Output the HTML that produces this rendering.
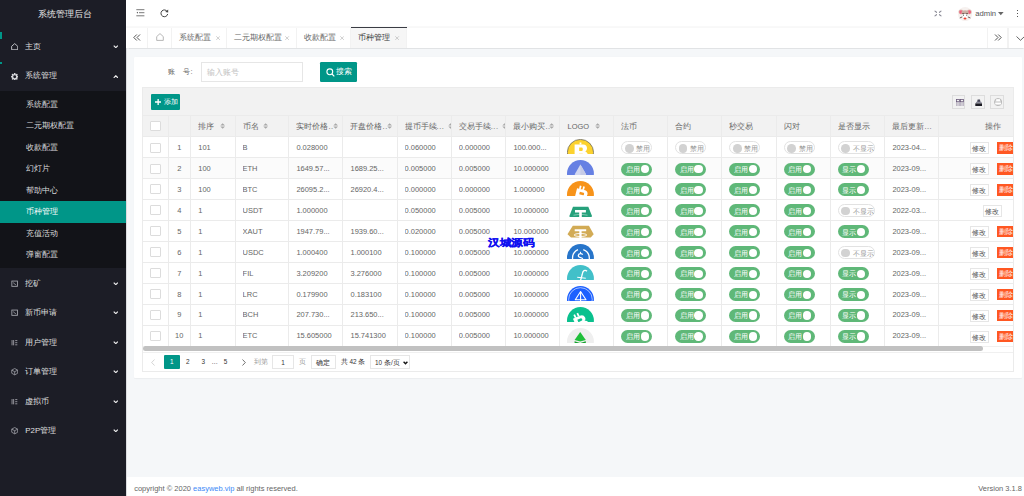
<!DOCTYPE html><html><head><meta charset="utf-8"><style>
*{margin:0;padding:0;box-sizing:border-box}
html,body{width:1024px;height:496px;overflow:hidden;background:#f5f7f9;font-family:"Liberation Sans",sans-serif;}
.abs{position:absolute}
#side{position:absolute;left:0;top:0;width:126px;height:496px;background:#1c1d26;}
.logo{position:absolute;left:0;width:126px;top:8px;text-align:center;color:#e8e8e8;font-size:9px;line-height:12px;padding-left:3.3px}
.ni{position:absolute;left:0;width:126px;height:29.6px;color:rgba(255,255,255,.88);font-size:7.9px;}
.ni .t{position:absolute;left:25.3px;top:0;line-height:29.6px;}
.ni .ic{position:absolute;left:10.8px;top:11.3px;width:7.4px;height:7.4px}
.ar{position:absolute;left:112.6px;width:5.6px;height:3.2px}
.ci{position:absolute;left:0;width:126px;height:21.48px;color:rgba(255,255,255,.85);font-size:7.9px;line-height:21.48px;padding-left:26px}
.ci.on{background:#009688;color:#fff}
#hdr{position:absolute;left:126px;top:0;width:898px;height:26.7px;background:#fff;}
#tabs{position:absolute;left:126px;top:26.7px;width:898px;height:21px;background:#fff;border-top:1px solid #f8f8f8;box-shadow:0 0.6px 1px rgba(0,0,0,.08)}
.tab{position:absolute;top:0;height:20px;border-right:1px solid #f2f2f2;font-size:7.9px;color:#666;line-height:20px}
.tab .x{position:absolute;color:#bbb;font-size:7px}
#vline{position:absolute;left:126px;top:47.6px;width:1.3px;height:430px;background:#dcdde0}
#card{position:absolute;left:133.5px;top:56.5px;width:888px;height:321.8px;background:#fff;border-radius:1px;box-shadow:0 0.5px 1px rgba(0,0,0,.04)}
#tbl{position:absolute;left:141.9px;top:86.9px;width:872px;height:285.4px;border:1px solid #ebebeb;overflow:hidden;background:#fff}
.cell{position:absolute;overflow:hidden;white-space:nowrap;font-size:7.47px;color:#666;}
.hl{position:absolute;background:#ebebeb}
.sw{position:absolute;height:13px;border-radius:7px;font-size:6.8px;line-height:13px}
.sw.on{background:#5fb878;color:#fff;width:30.9px}
.sw.off{background:#fff;border:0.8px solid #e2e2e2;color:#999;width:30.9px;height:13.3px}
.knob{position:absolute;top:2.3px;width:8.4px;height:8.4px;border-radius:50%}
.sw.on .knob{background:#fff}
.sw.off .knob{background:#d2d2d2}
.btn{position:absolute;height:11.6px;font-size:6.9px;line-height:11px;text-align:center}
.edit{background:#fff;border:0.6px solid #e6e6e6;color:#555;width:19.2px}
.del{background:#ff5722;color:#fff;width:19.2px}
</style></head><body><div id="side">
<div class="logo">系统管理后台</div>
<div class="abs" style="left:0;top:32px;width:2px;height:7px;background:#009688"></div>
<div class="abs" style="left:0;top:61.6px;width:2px;height:2.3px;background:#009688"></div>
<div class="ni" style="top:31.7px"><svg class="ic" viewBox="0 0 7 7"><path d="M3.5 0.6 L6.4 3.1 V6.4 H0.6 V3.1 Z" fill="none" stroke="#d8d9dd" stroke-width="0.8"/></svg><span class="t">主页</span></div>
<svg class="ar" style="top:44.8px" viewBox="0 0 5.6 3.4"><path d="M0.6 0.6 L2.8 2.8 L5 0.6" fill="none" stroke="#f0f0f0" stroke-width="1.25"/></svg>
<div class="ni" style="top:61.400000000000006px"><svg class="ic" viewBox="0 0 7.4 7.4"><circle cx="3.7" cy="3.7" r="2.75" fill="#d8d9dd"/><circle cx="6.70" cy="3.70" r="0.85" fill="#d8d9dd"/><circle cx="5.82" cy="5.82" r="0.85" fill="#d8d9dd"/><circle cx="3.70" cy="6.70" r="0.85" fill="#d8d9dd"/><circle cx="1.58" cy="5.82" r="0.85" fill="#d8d9dd"/><circle cx="0.70" cy="3.70" r="0.85" fill="#d8d9dd"/><circle cx="1.58" cy="1.58" r="0.85" fill="#d8d9dd"/><circle cx="3.70" cy="0.70" r="0.85" fill="#d8d9dd"/><circle cx="5.82" cy="1.58" r="0.85" fill="#d8d9dd"/><circle cx="3.7" cy="3.7" r="1.45" fill="#1c1d26"/></svg><span class="t">系统管理</span></div>
<svg class="ar" style="top:74.5px" viewBox="0 0 5.6 3.4"><path d="M0.6 3 L2.8 0.8 L5 3" fill="none" stroke="#f0f0f0" stroke-width="1.25"/></svg>
<div class="abs" style="left:0;top:91.3px;width:126px;height:176.7px;background:#121318"></div>
<div class="ci" style="top:93.66000000000001px">系统配置</div>
<div class="ci" style="top:115.14000000000001px">二元期权配置</div>
<div class="ci" style="top:136.62px">收款配置</div>
<div class="ci" style="top:158.1px">幻灯片</div>
<div class="ci" style="top:179.57999999999998px">帮助中心</div>
<div class="ci on" style="top:201.06px">币种管理</div>
<div class="ci" style="top:222.54px">充值活动</div>
<div class="ci" style="top:244.02px">弹窗配置</div>
<div class="ni" style="top:268.7px"><svg class="ic" viewBox="0 0 7 7"><rect x="0.8" y="1" width="5.4" height="5" fill="none" stroke="#a8a9b0" stroke-width="0.8"/><path d="M2 2.5 L5 5" stroke="#a8a9b0" stroke-width="0.7"/></svg><span class="t">挖矿</span></div>
<svg class="ar" style="top:281.8px" viewBox="0 0 5.6 3.4"><path d="M0.6 0.6 L2.8 2.8 L5 0.6" fill="none" stroke="#f0f0f0" stroke-width="1.25"/></svg>
<div class="ni" style="top:298.2px"><svg class="ic" viewBox="0 0 7 7"><rect x="0.8" y="1" width="5.4" height="5" fill="none" stroke="#a8a9b0" stroke-width="0.8"/><path d="M2 2.5 L5 5" stroke="#a8a9b0" stroke-width="0.7"/></svg><span class="t">新币申请</span></div>
<svg class="ar" style="top:311.3px" viewBox="0 0 5.6 3.4"><path d="M0.6 0.6 L2.8 2.8 L5 0.6" fill="none" stroke="#f0f0f0" stroke-width="1.25"/></svg>
<div class="ni" style="top:327.7px"><svg class="ic" viewBox="0 0 7 7"><path d="M1 1 V6 M2.5 1 V6 M4 1.5 H6 M4 3.5 H6 M4 5.5 H6" stroke="#a8a9b0" stroke-width="0.8"/></svg><span class="t">用户管理</span></div>
<svg class="ar" style="top:340.8px" viewBox="0 0 5.6 3.4"><path d="M0.6 0.6 L2.8 2.8 L5 0.6" fill="none" stroke="#f0f0f0" stroke-width="1.25"/></svg>
<div class="ni" style="top:357.2px"><svg class="ic" viewBox="0 0 7 7"><path d="M3.5 0.5 L6.3 2 V5 L3.5 6.5 L0.7 5 V2 Z M0.7 2 L3.5 3.5 L6.3 2 M3.5 3.5 V6.5" fill="none" stroke="#a8a9b0" stroke-width="0.7"/></svg><span class="t">订单管理</span></div>
<svg class="ar" style="top:370.3px" viewBox="0 0 5.6 3.4"><path d="M0.6 0.6 L2.8 2.8 L5 0.6" fill="none" stroke="#f0f0f0" stroke-width="1.25"/></svg>
<div class="ni" style="top:386.7px"><svg class="ic" viewBox="0 0 7 7"><path d="M1 1 V6 M2.5 1 V6 M4 1.5 H6 M4 3.5 H6 M4 5.5 H6" stroke="#a8a9b0" stroke-width="0.8"/></svg><span class="t">虚拟币</span></div>
<svg class="ar" style="top:399.8px" viewBox="0 0 5.6 3.4"><path d="M0.6 0.6 L2.8 2.8 L5 0.6" fill="none" stroke="#f0f0f0" stroke-width="1.25"/></svg>
<div class="ni" style="top:416.2px"><svg class="ic" viewBox="0 0 7 7"><path d="M3.5 0.5 L6.3 2 V5 L3.5 6.5 L0.7 5 V2 Z M0.7 2 L3.5 3.5 L6.3 2 M3.5 3.5 V6.5" fill="none" stroke="#a8a9b0" stroke-width="0.7"/></svg><span class="t">P2P管理</span></div>
<svg class="ar" style="top:429.3px" viewBox="0 0 5.6 3.4"><path d="M0.6 0.6 L2.8 2.8 L5 0.6" fill="none" stroke="#f0f0f0" stroke-width="1.25"/></svg>
</div>
<div id="hdr">
<svg class="abs" style="left:10px;top:9.2px" width="9" height="8" viewBox="0 0 9 8"><path d="M0.3 0.7 H8.4 M3 3.7 H8.4 M0.3 6.8 H8.4" stroke="#555" stroke-width="0.8"/><path d="M0.5 3.7 L2 2.8 V4.6 Z" fill="#555"/></svg>
<svg class="abs" style="left:34.3px;top:9px" width="9" height="9" viewBox="0 0 9 9"><path d="M7.3 2.6 A3.4 3.4 0 1 0 7.7 5" fill="none" stroke="#444" stroke-width="1"/><path d="M5.2 2.9 L8.2 0.6 L8.2 3.6 Z" fill="#444"/></svg>
<svg class="abs" style="left:807.5px;top:9.5px" width="8" height="7" viewBox="0 0 8 7"><path d="M1 1.1 L2.5 2.3 M7 1.1 L5.5 2.3 M1 5.9 L2.5 4.7 M7 5.9 L5.5 4.7" fill="none" stroke="#8a8a96" stroke-width="1.1" stroke-linecap="round"/></svg>
<svg class="abs" style="left:832px;top:6.8px" width="14.2" height="14.2" viewBox="0 0 14.2 14.2"><circle cx="7.1" cy="7.1" r="7.1" fill="#f6f1ef"/><circle cx="3" cy="5.1" r="2.5" fill="#dcc3b8"/><circle cx="11.3" cy="5.1" r="2.5" fill="#dcc3b8"/><circle cx="3" cy="5.1" r="1.8" fill="#f2607c"/><circle cx="11.3" cy="5.1" r="1.8" fill="#f2607c"/><ellipse cx="7.1" cy="5.6" rx="3.6" ry="2.3" fill="#cdb0a4"/><path d="M4.3 6.5 H9.9" stroke="#5a3b34" stroke-width="0.8"/><ellipse cx="7.1" cy="9" rx="2.6" ry="2.6" fill="#fff"/><path d="M5.5 7.5 V9 M8.7 7.5 V9" stroke="#555" stroke-width="0.7"/><ellipse cx="7" cy="11.4" rx="1.5" ry="1" fill="#ee4433"/><path d="M1.8 11 L4.3 9.9 M12.4 11 L9.9 9.9" stroke="#4a3a35" stroke-width="0.8"/></svg>
<div class="abs" style="left:849.2px;top:7.2px;font-size:7.7px;line-height:13px;color:#555">admin</div>
<svg class="abs" style="left:871.8px;top:11.6px" width="6" height="4" viewBox="0 0 6 4"><path d="M0 0 H5.6 L2.8 3.2 Z" fill="#666"/></svg>
<div class="abs" style="left:890.8px;top:10px;width:1.1px;height:1.1px;background:#555;box-shadow:0 3px 0 #555,0 6px 0 #555"></div>
</div>
<div id="tabs">
<div class="tab" style="left:0;width:21.6px"><svg class="abs" style="left:6.5px;top:6.3px" width="8" height="7" viewBox="0 0 8 7"><path d="M3.8 0.5 L0.8 3.5 L3.8 6.5 M7 0.5 L4 3.5 L7 6.5" fill="none" stroke="#555" stroke-width="1"/></svg></div>
<div class="tab" style="left:21.6px;width:24.8px"><svg class="abs" style="left:8.5px;top:5.8px" width="8" height="8" viewBox="0 0 8 8"><path d="M4 0.6 L7.3 3.6 V7.4 H0.7 V3.6 Z" fill="none" stroke="#999" stroke-width="0.7"/></svg></div>
<div class="tab" style="left:46.400000000000006px;width:55.0px;color:#666"><span class="abs" style="left:7.1px;top:0">系统配置</span><svg class="abs" style="left:43.9px;top:7.9px" width="4.2" height="4.2" viewBox="0 0 4.2 4.2"><path d="M0.3 0.3 L3.9 3.9 M3.9 0.3 L0.3 3.9" stroke="#b0b0b0" stroke-width="0.6"/></svg></div>
<div class="tab" style="left:101.4px;width:69.20000000000002px;color:#666"><span class="abs" style="left:7.1px;top:0">二元期权配置</span><svg class="abs" style="left:58.100000000000016px;top:7.9px" width="4.2" height="4.2" viewBox="0 0 4.2 4.2"><path d="M0.3 0.3 L3.9 3.9 M3.9 0.3 L0.3 3.9" stroke="#b0b0b0" stroke-width="0.6"/></svg></div>
<div class="tab" style="left:170.60000000000002px;width:54.64999999999998px;color:#666"><span class="abs" style="left:7.1px;top:0">收款配置</span><svg class="abs" style="left:43.549999999999976px;top:7.9px" width="4.2" height="4.2" viewBox="0 0 4.2 4.2"><path d="M0.3 0.3 L3.9 3.9 M3.9 0.3 L0.3 3.9" stroke="#b0b0b0" stroke-width="0.6"/></svg></div>
<div class="tab" style="left:225.25px;width:55.25px;background:#f6f6f6;color:#333"><span class="abs" style="left:7.1px;top:0">币种管理</span><svg class="abs" style="left:44.15px;top:7.9px" width="4.2" height="4.2" viewBox="0 0 4.2 4.2"><path d="M0.3 0.3 L3.9 3.9 M3.9 0.3 L0.3 3.9" stroke="#b0b0b0" stroke-width="0.6"/></svg></div>
<div class="abs" style="left:225.25px;top:-1px;width:55.25px;height:1.2px;background:#3a3c44"></div>
<div class="tab" style="left:860.6px;width:21.1px;border-left:1px solid #f2f2f2"><svg class="abs" style="left:6.5px;top:6.3px" width="8" height="7" viewBox="0 0 8 7"><path d="M1 0.5 L4 3.5 L1 6.5 M4.2 0.5 L7.2 3.5 L4.2 6.5" fill="none" stroke="#555" stroke-width="1"/></svg></div>
<div class="tab" style="left:881.7px;width:20px;border-left:1px solid #f2f2f2;border-right:none"><svg class="abs" style="left:7px;top:8px" width="9" height="5" viewBox="0 0 9 5"><path d="M0.5 0.5 L4.5 4.3 L8.5 0.5" fill="none" stroke="#555" stroke-width="0.9"/></svg></div>
</div>
<div class="abs" style="left:126px;top:26px;width:898px;height:0.7px;background:#f9f9f9"></div>
<div id="vline"></div>
<div id="card"></div>
<div class="abs" style="left:168.2px;top:66.7px;font-size:7.47px;line-height:10px;color:#666;letter-spacing:0">账&nbsp;&nbsp;&nbsp;&nbsp;号:</div>
<div class="abs" style="left:201px;top:61.8px;width:102px;height:20px;border:0.6px solid #e6e6e6;background:#fff;font-size:8px;color:#c2c2c2;line-height:19px;padding-left:5.2px">输入账号</div>
<div class="abs" style="left:320.2px;top:61.8px;width:37.1px;height:20.3px;background:#009688;border-radius:1.2px;color:#fff;font-size:8px;line-height:20.3px"><svg class="abs" style="left:5.5px;top:5.8px" width="9" height="9" viewBox="0 0 9 9"><circle cx="3.8" cy="3.8" r="2.9" fill="none" stroke="#fff" stroke-width="1.1"/><path d="M6 6 L8.3 8.3" stroke="#fff" stroke-width="1.2"/></svg><span class="abs" style="left:15.5px;top:0">搜索</span></div>
<div id="tbl">
<div class="abs" style="left:0;top:0;width:872px;height:27.0px;background:#f2f2f2"></div>
<div class="abs" style="left:0;top:27.0px;width:872px;height:21.400000000000006px;background:#f2f2f2"></div>
<div class="hl" style="left:0;top:27.0px;width:872px;height:0.6px"></div>
<div class="abs" style="left:7.7px;top:5.9px;width:29.5px;height:16.2px;background:#009688;border-radius:1px;color:#fff;font-size:6.4px;line-height:16.2px"><svg class="abs" style="left:4.4px;top:5.2px" width="6.3" height="6" viewBox="0 0 6.3 6"><path d="M3.15 0 V6 M0 3 H6.3" stroke="#fff" stroke-width="1.3"/></svg><span class="abs" style="left:13.2px;top:0.2px;font-size:7px">添加</span></div>
<div class="abs" style="left:808.8px;top:7.3px;width:13.6px;height:13.5px;border:0.6px solid #ddd"></div>
<div class="abs" style="left:828.35px;top:7.3px;width:13.6px;height:13.5px;border:0.6px solid #ddd"></div>
<div class="abs" style="left:847.3px;top:7.3px;width:13.6px;height:13.5px;border:0.6px solid #ddd"></div>
<svg class="abs" style="left:812.7px;top:10.7px" width="8" height="7.6" viewBox="0 0 8 7.6"><rect x="0.5" y="0.5" width="3" height="2.2" fill="none" stroke="#6a5a7a" stroke-width="0.8"/><rect x="4.5" y="0.5" width="3" height="2.2" fill="none" stroke="#6a5a7a" stroke-width="0.8"/><path d="M0.9 3 V7.4 M3.1 3 V7.4 M4.9 3 V7.4 M7.1 3 V7.4" stroke="#7a6a8a" stroke-width="0.7"/></svg>
<svg class="abs" style="left:831.9px;top:10.9px" width="7.6" height="7.4" viewBox="0 0 7.6 7.4"><path d="M2.6 0.4 H5 L5.6 3.8 H2 Z" fill="#4a4a5a"/><path d="M1.4 2.8 L0.6 4.2 H7 L6.2 2.8" fill="#8a8a9a"/><rect x="0.3" y="4.4" width="7" height="2.8" fill="#1a1a22"/></svg>
<svg class="abs" style="left:850.7px;top:10.4px" width="8.2" height="8.2" viewBox="0 0 8.2 8.2"><circle cx="4.1" cy="4.1" r="3.6" fill="#d6d6d6" stroke="#a8a8a8" stroke-width="0.7"/><rect x="2.2" y="1.2" width="3.8" height="2" fill="#fff"/><rect x="1.2" y="4.8" width="5.8" height="1.6" fill="#fff"/></svg>
<div class="abs" style="left:7.4px;top:32.7px;width:10.4px;height:10px;border:0.6px solid #dcdcdc;border-radius:1px;background:#fff"></div>
<div class="cell" style="left:33.3px;top:27.8px;width:14.100000000000023px;height:21.400000000000006px;line-height:21.400000000000006px"></div>
<div class="cell" style="left:55.4px;top:27.8px;width:36.29999999999998px;height:21.400000000000006px;line-height:21.400000000000006px"><span style="font-size:7.8px">排序</span><svg class="abs" style="left:21.299999999999983px;top:7.6px" width="5.3" height="6" viewBox="0 0 5.3 6"><path d="M0.3 2.6 L2.65 0.2 L5 2.6 Z M0.3 3.4 L2.65 5.8 L5 3.4 Z" fill="#a8a8a8"/></svg></div>
<div class="cell" style="left:99.7px;top:27.8px;width:45.79999999999998px;height:21.400000000000006px;line-height:21.400000000000006px"><span style="font-size:7.8px">币名</span><svg class="abs" style="left:20.400000000000006px;top:7.6px" width="5.3" height="6" viewBox="0 0 5.3 6"><path d="M0.3 2.6 L2.65 0.2 L5 2.6 Z M0.3 3.4 L2.65 5.8 L5 3.4 Z" fill="#a8a8a8"/></svg></div>
<div class="cell" style="left:153.5px;top:27.8px;width:46.10000000000002px;height:21.400000000000006px;line-height:21.400000000000006px"><span style="font-size:7.8px">实时价格</span><span style="letter-spacing:0.6px">..</span><svg class="abs" style="left:36.30000000000001px;top:7.6px" width="5.3" height="6" viewBox="0 0 5.3 6"><path d="M0.3 2.6 L2.65 0.2 L5 2.6 Z M0.3 3.4 L2.65 5.8 L5 3.4 Z" fill="#a8a8a8"/></svg></div>
<div class="cell" style="left:207.6px;top:27.8px;width:46.10000000000002px;height:21.400000000000006px;line-height:21.400000000000006px"><span style="font-size:7.8px">开盘价格</span><span style="letter-spacing:0.6px">..</span><svg class="abs" style="left:36.5px;top:7.6px" width="5.3" height="6" viewBox="0 0 5.3 6"><path d="M0.3 2.6 L2.65 0.2 L5 2.6 Z M0.3 3.4 L2.65 5.8 L5 3.4 Z" fill="#a8a8a8"/></svg></div>
<div class="cell" style="left:261.7px;top:27.8px;width:46.19999999999999px;height:21.400000000000006px;line-height:21.400000000000006px"><span style="font-size:7.8px">提币手续</span><span style="letter-spacing:0.5px">...</span><svg class="abs" style="left:43.39999999999998px;top:7.6px" width="5.3" height="6" viewBox="0 0 5.3 6"><path d="M0.3 2.6 L2.65 0.2 L5 2.6 Z M0.3 3.4 L2.65 5.8 L5 3.4 Z" fill="#a8a8a8"/></svg></div>
<div class="cell" style="left:315.9px;top:27.8px;width:46.599999999999966px;height:21.400000000000006px;line-height:21.400000000000006px"><span style="font-size:7.8px">交易手续</span><span style="letter-spacing:0.5px">...</span><svg class="abs" style="left:43.30000000000001px;top:7.6px" width="5.3" height="6" viewBox="0 0 5.3 6"><path d="M0.3 2.6 L2.65 0.2 L5 2.6 Z M0.3 3.4 L2.65 5.8 L5 3.4 Z" fill="#a8a8a8"/></svg></div>
<div class="cell" style="left:370.5px;top:27.8px;width:46.10000000000002px;height:21.400000000000006px;line-height:21.400000000000006px"><span style="font-size:7.8px">最小购买</span><span style="letter-spacing:0.6px">..</span><svg class="abs" style="left:36.0px;top:7.6px" width="5.3" height="6" viewBox="0 0 5.3 6"><path d="M0.3 2.6 L2.65 0.2 L5 2.6 Z M0.3 3.4 L2.65 5.8 L5 3.4 Z" fill="#a8a8a8"/></svg></div>
<div class="cell" style="left:424.6px;top:27.8px;width:46.0px;height:21.400000000000006px;line-height:21.400000000000006px">LOGO<svg class="abs" style="left:27.799999999999955px;top:7.6px" width="5.3" height="6" viewBox="0 0 5.3 6"><path d="M0.3 2.6 L2.65 0.2 L5 2.6 Z M0.3 3.4 L2.65 5.8 L5 3.4 Z" fill="#a8a8a8"/></svg></div>
<div class="cell" style="left:478.6px;top:27.8px;width:45.89999999999998px;height:21.400000000000006px;line-height:21.400000000000006px"><span style="font-size:7.8px">法币</span></div>
<div class="cell" style="left:532.5px;top:27.8px;width:46.10000000000002px;height:21.400000000000006px;line-height:21.400000000000006px"><span style="font-size:7.8px">合约</span></div>
<div class="cell" style="left:586.6px;top:27.8px;width:46.299999999999955px;height:21.400000000000006px;line-height:21.400000000000006px"><span style="font-size:7.8px">秒交易</span></div>
<div class="cell" style="left:640.9px;top:27.8px;width:46.200000000000045px;height:21.400000000000006px;line-height:21.400000000000006px"><span style="font-size:7.8px">闪对</span></div>
<div class="cell" style="left:695.1px;top:27.8px;width:46.39999999999998px;height:21.400000000000006px;line-height:21.400000000000006px"><span style="font-size:7.8px">是否显示</span></div>
<div class="cell" style="left:749.5px;top:27.8px;width:46.0px;height:21.400000000000006px;line-height:21.400000000000006px"><span style="font-size:7.8px">最后更新</span><span style="letter-spacing:0.5px">...</span></div>
<div class="cell" style="left:795.5px;top:27.8px;width:108.19999999999993px;height:21.400000000000006px;line-height:21.400000000000006px;text-align:center;font-size:7.8px;padding-left:0.6px">操作</div>
<div class="hl" style="left:25.3px;top:27.0px;width:0.6px;height:230.9px"></div>
<div class="hl" style="left:47.4px;top:27.0px;width:0.6px;height:230.9px"></div>
<div class="hl" style="left:91.7px;top:27.0px;width:0.6px;height:230.9px"></div>
<div class="hl" style="left:145.5px;top:27.0px;width:0.6px;height:230.9px"></div>
<div class="hl" style="left:199.6px;top:27.0px;width:0.6px;height:230.9px"></div>
<div class="hl" style="left:253.7px;top:27.0px;width:0.6px;height:230.9px"></div>
<div class="hl" style="left:307.9px;top:27.0px;width:0.6px;height:230.9px"></div>
<div class="hl" style="left:362.5px;top:27.0px;width:0.6px;height:230.9px"></div>
<div class="hl" style="left:416.6px;top:27.0px;width:0.6px;height:230.9px"></div>
<div class="hl" style="left:470.6px;top:27.0px;width:0.6px;height:230.9px"></div>
<div class="hl" style="left:524.5px;top:27.0px;width:0.6px;height:230.9px"></div>
<div class="hl" style="left:578.6px;top:27.0px;width:0.6px;height:230.9px"></div>
<div class="hl" style="left:632.9px;top:27.0px;width:0.6px;height:230.9px"></div>
<div class="hl" style="left:687.1px;top:27.0px;width:0.6px;height:230.9px"></div>
<div class="hl" style="left:741.5px;top:27.0px;width:0.6px;height:230.9px"></div>
<div class="hl" style="left:795.5px;top:27.0px;width:0.6px;height:230.9px"></div>
<div class="hl" style="left:903.7px;top:27.0px;width:0.6px;height:230.9px"></div>
<div class="abs" style="left:0;top:48.4px;width:872px;height:20.95px;background:#fff"></div>
<div class="hl" style="left:0;top:48.4px;width:872px;height:0.6px"></div>
<div class="abs" style="left:7.4px;top:54.699999999999996px;width:10.4px;height:10px;border:0.6px solid #dcdcdc;border-radius:1px;background:#fff"></div>
<div class="cell" style="left:25.3px;top:50.0px;width:22.100000000000023px;height:20.95px;line-height:20.95px;text-align:center">1</div>
<div class="cell" style="left:55.4px;top:50.0px;width:36.29999999999998px;height:20.95px;line-height:20.95px">101</div>
<div class="cell" style="left:99.7px;top:50.0px;width:45.79999999999998px;height:20.95px;line-height:20.95px">B</div>
<div class="cell" style="left:153.5px;top:50.0px;width:46.10000000000002px;height:20.95px;line-height:20.95px">0.028000</div>
<div class="cell" style="left:207.6px;top:50.0px;width:46.10000000000002px;height:20.95px;line-height:20.95px"></div>
<div class="cell" style="left:261.7px;top:50.0px;width:46.19999999999999px;height:20.95px;line-height:20.95px">0.060000</div>
<div class="cell" style="left:315.9px;top:50.0px;width:46.599999999999966px;height:20.95px;line-height:20.95px">0.000000</div>
<div class="cell" style="left:370.5px;top:50.0px;width:46.10000000000002px;height:20.95px;line-height:20.95px">100.000...</div>
<svg class="abs" style="left:424.4px;top:51.5px" width="27" height="15" viewBox="0 0 27 15"><circle cx="13.45" cy="13.5" r="13.1" fill="#fcd22e" stroke="#5a5a5a" stroke-width="0.7"/><path d="M7.6 5.6 H16 Q20 5.6 20 9.5 Q20 11.6 18.3 12.4 Q21 13.3 21 17 Q21 21 16.8 21 H7.6 Z M12.2 8.6 V12 H15 Q15.8 12 15.8 10.3 Q15.8 8.6 15 8.6 Z M12.2 14.8 V18.5 H15.5 Q16.5 18.5 16.5 16.6 Q16.5 14.8 15.5 14.8 Z M12.6 3.6 H14.4 V5.8 H12.6 Z" fill="#fff" fill-rule="evenodd"/></svg>
<div class="sw off" style="left:478.6px;top:53.3px;width:30.9px"><div class="knob" style="left:2.4px;top:1.7px;width:8.7px;height:8.7px"></div><span class="abs" style="left:14px;top:-0.3px">禁用</span></div>
<div class="sw off" style="left:532.5px;top:53.3px;width:30.9px"><div class="knob" style="left:2.4px;top:1.7px;width:8.7px;height:8.7px"></div><span class="abs" style="left:14px;top:-0.3px">禁用</span></div>
<div class="sw off" style="left:586.6px;top:53.3px;width:30.9px"><div class="knob" style="left:2.4px;top:1.7px;width:8.7px;height:8.7px"></div><span class="abs" style="left:14px;top:-0.3px">禁用</span></div>
<div class="sw off" style="left:640.9px;top:53.3px;width:30.9px"><div class="knob" style="left:2.4px;top:1.7px;width:8.7px;height:8.7px"></div><span class="abs" style="left:14px;top:-0.3px">禁用</span></div>
<div class="sw off" style="left:695.1px;top:53.3px;width:37.2px"><div class="knob" style="left:2.4px;top:1.7px;width:8.7px;height:8.7px"></div><span class="abs" style="left:14px;top:-0.3px">不显示</span></div>
<div class="cell" style="left:749.5px;top:50.0px;width:46.0px;height:20.95px;line-height:20.95px">2023-04...</div>
<div class="btn edit" style="left:827.0px;top:54.5px">修改</div>
<div class="btn del" style="left:853.9px;top:54.199999999999996px;line-height:11.6px">删除</div>
<div class="abs" style="left:0;top:69.35px;width:872px;height:20.95px;background:#fbfbfb"></div>
<div class="hl" style="left:0;top:69.35px;width:872px;height:0.6px"></div>
<div class="abs" style="left:7.4px;top:75.64999999999999px;width:10.4px;height:10px;border:0.6px solid #dcdcdc;border-radius:1px;background:#fff"></div>
<div class="cell" style="left:25.3px;top:70.94999999999999px;width:22.100000000000023px;height:20.95px;line-height:20.95px;text-align:center">2</div>
<div class="cell" style="left:55.4px;top:70.94999999999999px;width:36.29999999999998px;height:20.95px;line-height:20.95px">100</div>
<div class="cell" style="left:99.7px;top:70.94999999999999px;width:45.79999999999998px;height:20.95px;line-height:20.95px">ETH</div>
<div class="cell" style="left:153.5px;top:70.94999999999999px;width:46.10000000000002px;height:20.95px;line-height:20.95px">1649.57...</div>
<div class="cell" style="left:207.6px;top:70.94999999999999px;width:46.10000000000002px;height:20.95px;line-height:20.95px">1689.25...</div>
<div class="cell" style="left:261.7px;top:70.94999999999999px;width:46.19999999999999px;height:20.95px;line-height:20.95px">0.005000</div>
<div class="cell" style="left:315.9px;top:70.94999999999999px;width:46.599999999999966px;height:20.95px;line-height:20.95px">0.005000</div>
<div class="cell" style="left:370.5px;top:70.94999999999999px;width:46.10000000000002px;height:20.95px;line-height:20.95px">10.000000</div>
<svg class="abs" style="left:424.4px;top:72.44999999999999px" width="27" height="15" viewBox="0 0 27 15"><circle cx="13.45" cy="13.5" r="13.45" fill="#6680e3"/><path d="M13.4 4.5 L19.2 14.5 L13.4 18 L7.6 14.5 Z" fill="#d3d8f0"/><path d="M13.4 4.5 L19.2 14.5 L13.4 18 Z" fill="#c6cbe6"/></svg>
<div class="sw on" style="left:478.6px;top:74.64999999999999px"><span class="abs" style="left:4.2px;top:0.2px">启用</span><div class="knob" style="left:19.1px"></div></div>
<div class="sw on" style="left:532.5px;top:74.64999999999999px"><span class="abs" style="left:4.2px;top:0.2px">启用</span><div class="knob" style="left:19.1px"></div></div>
<div class="sw on" style="left:586.6px;top:74.64999999999999px"><span class="abs" style="left:4.2px;top:0.2px">启用</span><div class="knob" style="left:19.1px"></div></div>
<div class="sw on" style="left:640.9px;top:74.64999999999999px"><span class="abs" style="left:4.2px;top:0.2px">启用</span><div class="knob" style="left:19.1px"></div></div>
<div class="sw on" style="left:695.1px;top:74.64999999999999px"><span class="abs" style="left:4.2px;top:0.2px">显示</span><div class="knob" style="left:19.1px"></div></div>
<div class="cell" style="left:749.5px;top:70.94999999999999px;width:46.0px;height:20.95px;line-height:20.95px">2023-09...</div>
<div class="btn edit" style="left:827.0px;top:75.44999999999999px">修改</div>
<div class="btn del" style="left:853.9px;top:75.14999999999999px;line-height:11.6px">删除</div>
<div class="abs" style="left:0;top:90.3px;width:872px;height:20.95px;background:#fff"></div>
<div class="hl" style="left:0;top:90.3px;width:872px;height:0.6px"></div>
<div class="abs" style="left:7.4px;top:96.6px;width:10.4px;height:10px;border:0.6px solid #dcdcdc;border-radius:1px;background:#fff"></div>
<div class="cell" style="left:25.3px;top:91.89999999999999px;width:22.100000000000023px;height:20.95px;line-height:20.95px;text-align:center">3</div>
<div class="cell" style="left:55.4px;top:91.89999999999999px;width:36.29999999999998px;height:20.95px;line-height:20.95px">100</div>
<div class="cell" style="left:99.7px;top:91.89999999999999px;width:45.79999999999998px;height:20.95px;line-height:20.95px">BTC</div>
<div class="cell" style="left:153.5px;top:91.89999999999999px;width:46.10000000000002px;height:20.95px;line-height:20.95px">26095.2...</div>
<div class="cell" style="left:207.6px;top:91.89999999999999px;width:46.10000000000002px;height:20.95px;line-height:20.95px">26920.4...</div>
<div class="cell" style="left:261.7px;top:91.89999999999999px;width:46.19999999999999px;height:20.95px;line-height:20.95px">0.000000</div>
<div class="cell" style="left:315.9px;top:91.89999999999999px;width:46.599999999999966px;height:20.95px;line-height:20.95px">0.000000</div>
<div class="cell" style="left:370.5px;top:91.89999999999999px;width:46.10000000000002px;height:20.95px;line-height:20.95px">1.000000</div>
<svg class="abs" style="left:424.4px;top:93.39999999999999px" width="27" height="15" viewBox="0 0 27 15"><circle cx="13.45" cy="13.5" r="13.45" fill="#f7931a"/><path d="M9.5 8.5 H16 Q19.6 8.5 19.6 11.9 Q19.6 13.7 17.9 14.4 Q20.6 15.1 20.6 18.4 Q20.6 22.2 16.5 22.2 H9.5 Z M12.6 10.9 V13.2 H16 Q16.6 13.2 16.6 12 Q16.6 10.9 16 10.9 Z M12.6 16 V19.6 H16.6 Q17.4 19.6 17.4 17.8 Q17.4 16 16.6 16 Z M11.3 5.6 H12.8 V8.6 H11.3 Z M14.3 5.6 H15.8 V8.6 H14.3 Z M11.3 22 H12.8 V24 H11.3 Z M14.3 22 H15.8 V24 H14.3 Z" fill="#fff" fill-rule="evenodd" transform="rotate(14 15 15) translate(15 15) scale(1.15) translate(-15.3 -14)"/></svg>
<div class="sw on" style="left:478.6px;top:95.6px"><span class="abs" style="left:4.2px;top:0.2px">启用</span><div class="knob" style="left:19.1px"></div></div>
<div class="sw on" style="left:532.5px;top:95.6px"><span class="abs" style="left:4.2px;top:0.2px">启用</span><div class="knob" style="left:19.1px"></div></div>
<div class="sw on" style="left:586.6px;top:95.6px"><span class="abs" style="left:4.2px;top:0.2px">启用</span><div class="knob" style="left:19.1px"></div></div>
<div class="sw on" style="left:640.9px;top:95.6px"><span class="abs" style="left:4.2px;top:0.2px">启用</span><div class="knob" style="left:19.1px"></div></div>
<div class="sw on" style="left:695.1px;top:95.6px"><span class="abs" style="left:4.2px;top:0.2px">显示</span><div class="knob" style="left:19.1px"></div></div>
<div class="cell" style="left:749.5px;top:91.89999999999999px;width:46.0px;height:20.95px;line-height:20.95px">2023-09...</div>
<div class="btn edit" style="left:827.0px;top:96.39999999999999px">修改</div>
<div class="btn del" style="left:853.9px;top:96.1px;line-height:11.6px">删除</div>
<div class="abs" style="left:0;top:111.25px;width:872px;height:20.95px;background:#fff"></div>
<div class="hl" style="left:0;top:111.25px;width:872px;height:0.6px"></div>
<div class="abs" style="left:7.4px;top:117.55px;width:10.4px;height:10px;border:0.6px solid #dcdcdc;border-radius:1px;background:#fff"></div>
<div class="cell" style="left:25.3px;top:112.85px;width:22.100000000000023px;height:20.95px;line-height:20.95px;text-align:center">4</div>
<div class="cell" style="left:55.4px;top:112.85px;width:36.29999999999998px;height:20.95px;line-height:20.95px">1</div>
<div class="cell" style="left:99.7px;top:112.85px;width:45.79999999999998px;height:20.95px;line-height:20.95px">USDT</div>
<div class="cell" style="left:153.5px;top:112.85px;width:46.10000000000002px;height:20.95px;line-height:20.95px">1.000000</div>
<div class="cell" style="left:207.6px;top:112.85px;width:46.10000000000002px;height:20.95px;line-height:20.95px"></div>
<div class="cell" style="left:261.7px;top:112.85px;width:46.19999999999999px;height:20.95px;line-height:20.95px">0.050000</div>
<div class="cell" style="left:315.9px;top:112.85px;width:46.599999999999966px;height:20.95px;line-height:20.95px">0.005000</div>
<div class="cell" style="left:370.5px;top:112.85px;width:46.10000000000002px;height:20.95px;line-height:20.95px">10.000000</div>
<svg class="abs" style="left:424.4px;top:114.35px" width="27" height="15" viewBox="0 0 27 15"><path d="M6 4.7 H21.3 L25 14 Q25 15 24 15 H3.2 Q2.2 15 2.4 14 Z" fill="#26a17b"/><path d="M8 7.9 H18.9 V10.6 H14.8 V15 H12.2 V10.6 H8 Z" fill="#fff"/><path d="M6.5 13.2 Q13.5 11.2 20.5 13.2" fill="none" stroke="#fff" stroke-width="0.6" opacity="0.7"/></svg>
<div class="sw on" style="left:478.6px;top:116.55px"><span class="abs" style="left:4.2px;top:0.2px">启用</span><div class="knob" style="left:19.1px"></div></div>
<div class="sw on" style="left:532.5px;top:116.55px"><span class="abs" style="left:4.2px;top:0.2px">启用</span><div class="knob" style="left:19.1px"></div></div>
<div class="sw on" style="left:586.6px;top:116.55px"><span class="abs" style="left:4.2px;top:0.2px">启用</span><div class="knob" style="left:19.1px"></div></div>
<div class="sw on" style="left:640.9px;top:116.55px"><span class="abs" style="left:4.2px;top:0.2px">启用</span><div class="knob" style="left:19.1px"></div></div>
<div class="sw off" style="left:695.1px;top:116.15px;width:37.2px"><div class="knob" style="left:2.4px;top:1.7px;width:8.7px;height:8.7px"></div><span class="abs" style="left:14px;top:-0.3px">不显示</span></div>
<div class="cell" style="left:749.5px;top:112.85px;width:46.0px;height:20.95px;line-height:20.95px">2022-03...</div>
<div class="btn edit" style="left:840.0px;top:117.35px">修改</div>
<div class="abs" style="left:0;top:132.2px;width:872px;height:20.95px;background:#fff"></div>
<div class="hl" style="left:0;top:132.2px;width:872px;height:0.6px"></div>
<div class="abs" style="left:7.4px;top:138.5px;width:10.4px;height:10px;border:0.6px solid #dcdcdc;border-radius:1px;background:#fff"></div>
<div class="cell" style="left:25.3px;top:133.79999999999998px;width:22.100000000000023px;height:20.95px;line-height:20.95px;text-align:center">5</div>
<div class="cell" style="left:55.4px;top:133.79999999999998px;width:36.29999999999998px;height:20.95px;line-height:20.95px">1</div>
<div class="cell" style="left:99.7px;top:133.79999999999998px;width:45.79999999999998px;height:20.95px;line-height:20.95px">XAUT</div>
<div class="cell" style="left:153.5px;top:133.79999999999998px;width:46.10000000000002px;height:20.95px;line-height:20.95px">1947.79...</div>
<div class="cell" style="left:207.6px;top:133.79999999999998px;width:46.10000000000002px;height:20.95px;line-height:20.95px">1939.60...</div>
<div class="cell" style="left:261.7px;top:133.79999999999998px;width:46.19999999999999px;height:20.95px;line-height:20.95px">0.020000</div>
<div class="cell" style="left:315.9px;top:133.79999999999998px;width:46.599999999999966px;height:20.95px;line-height:20.95px">0.005000</div>
<div class="cell" style="left:370.5px;top:133.79999999999998px;width:46.10000000000002px;height:20.95px;line-height:20.95px">10.000000</div>
<svg class="abs" style="left:424.4px;top:135.29999999999998px" width="27" height="15" viewBox="0 0 27 15"><path d="M5.8 2.85 H21.9 L26.7 11.2 L23.7 14.6 H4 L0.5 11.2 Z" fill="#d2ab55"/><path d="M7.7 6.3 H19.2 V8.3 H14.6 V15 H12.3 V8.3 H7.7 Z" fill="#fff"/><ellipse cx="13.45" cy="12" rx="6.4" ry="1.5" fill="none" stroke="#fff" stroke-width="0.9"/></svg>
<div class="sw on" style="left:478.6px;top:137.5px"><span class="abs" style="left:4.2px;top:0.2px">启用</span><div class="knob" style="left:19.1px"></div></div>
<div class="sw on" style="left:532.5px;top:137.5px"><span class="abs" style="left:4.2px;top:0.2px">启用</span><div class="knob" style="left:19.1px"></div></div>
<div class="sw on" style="left:586.6px;top:137.5px"><span class="abs" style="left:4.2px;top:0.2px">启用</span><div class="knob" style="left:19.1px"></div></div>
<div class="sw on" style="left:640.9px;top:137.5px"><span class="abs" style="left:4.2px;top:0.2px">启用</span><div class="knob" style="left:19.1px"></div></div>
<div class="sw on" style="left:695.1px;top:137.5px"><span class="abs" style="left:4.2px;top:0.2px">显示</span><div class="knob" style="left:19.1px"></div></div>
<div class="cell" style="left:749.5px;top:133.79999999999998px;width:46.0px;height:20.95px;line-height:20.95px">2023-09...</div>
<div class="btn edit" style="left:827.0px;top:138.29999999999998px">修改</div>
<div class="btn del" style="left:853.9px;top:138.0px;line-height:11.6px">删除</div>
<div class="abs" style="left:0;top:153.15px;width:872px;height:20.95px;background:#fff"></div>
<div class="hl" style="left:0;top:153.15px;width:872px;height:0.6px"></div>
<div class="abs" style="left:7.4px;top:159.45000000000002px;width:10.4px;height:10px;border:0.6px solid #dcdcdc;border-radius:1px;background:#fff"></div>
<div class="cell" style="left:25.3px;top:154.75px;width:22.100000000000023px;height:20.95px;line-height:20.95px;text-align:center">6</div>
<div class="cell" style="left:55.4px;top:154.75px;width:36.29999999999998px;height:20.95px;line-height:20.95px">1</div>
<div class="cell" style="left:99.7px;top:154.75px;width:45.79999999999998px;height:20.95px;line-height:20.95px">USDC</div>
<div class="cell" style="left:153.5px;top:154.75px;width:46.10000000000002px;height:20.95px;line-height:20.95px">1.000400</div>
<div class="cell" style="left:207.6px;top:154.75px;width:46.10000000000002px;height:20.95px;line-height:20.95px">1.000100</div>
<div class="cell" style="left:261.7px;top:154.75px;width:46.19999999999999px;height:20.95px;line-height:20.95px">0.100000</div>
<div class="cell" style="left:315.9px;top:154.75px;width:46.599999999999966px;height:20.95px;line-height:20.95px">0.005000</div>
<div class="cell" style="left:370.5px;top:154.75px;width:46.10000000000002px;height:20.95px;line-height:20.95px">10.000000</div>
<svg class="abs" style="left:424.4px;top:156.25px" width="27" height="15" viewBox="0 0 27 15"><circle cx="13.45" cy="13.5" r="13.45" fill="#2775ca"/><path d="M5.6 15 A9.5 9.5 0 0 1 11 5.6" fill="none" stroke="#fff" stroke-width="1.3"/><path d="M16.3 5.6 A9.5 9.5 0 0 1 22.3 15" fill="none" stroke="#fff" stroke-width="1.3"/><path d="M15.8 10.6 Q14.8 9.6 13.4 9.7 Q11.3 9.9 11.3 11.6 Q11.3 13.3 13.6 13.6 Q15.8 14 15.8 15.6" fill="none" stroke="#fff" stroke-width="1.2"/><path d="M13.5 7.8 V9.7" stroke="#fff" stroke-width="1.1"/></svg>
<div class="sw on" style="left:478.6px;top:158.45000000000002px"><span class="abs" style="left:4.2px;top:0.2px">启用</span><div class="knob" style="left:19.1px"></div></div>
<div class="sw on" style="left:532.5px;top:158.45000000000002px"><span class="abs" style="left:4.2px;top:0.2px">启用</span><div class="knob" style="left:19.1px"></div></div>
<div class="sw on" style="left:586.6px;top:158.45000000000002px"><span class="abs" style="left:4.2px;top:0.2px">启用</span><div class="knob" style="left:19.1px"></div></div>
<div class="sw on" style="left:640.9px;top:158.45000000000002px"><span class="abs" style="left:4.2px;top:0.2px">启用</span><div class="knob" style="left:19.1px"></div></div>
<div class="sw off" style="left:695.1px;top:158.05px;width:37.2px"><div class="knob" style="left:2.4px;top:1.7px;width:8.7px;height:8.7px"></div><span class="abs" style="left:14px;top:-0.3px">不显示</span></div>
<div class="cell" style="left:749.5px;top:154.75px;width:46.0px;height:20.95px;line-height:20.95px">2023-09...</div>
<div class="btn edit" style="left:827.0px;top:159.25px">修改</div>
<div class="btn del" style="left:853.9px;top:158.95000000000002px;line-height:11.6px">删除</div>
<div class="abs" style="left:0;top:174.1px;width:872px;height:20.95px;background:#fff"></div>
<div class="hl" style="left:0;top:174.1px;width:872px;height:0.6px"></div>
<div class="abs" style="left:7.4px;top:180.4px;width:10.4px;height:10px;border:0.6px solid #dcdcdc;border-radius:1px;background:#fff"></div>
<div class="cell" style="left:25.3px;top:175.7px;width:22.100000000000023px;height:20.95px;line-height:20.95px;text-align:center">7</div>
<div class="cell" style="left:55.4px;top:175.7px;width:36.29999999999998px;height:20.95px;line-height:20.95px">1</div>
<div class="cell" style="left:99.7px;top:175.7px;width:45.79999999999998px;height:20.95px;line-height:20.95px">FIL</div>
<div class="cell" style="left:153.5px;top:175.7px;width:46.10000000000002px;height:20.95px;line-height:20.95px">3.209200</div>
<div class="cell" style="left:207.6px;top:175.7px;width:46.10000000000002px;height:20.95px;line-height:20.95px">3.276000</div>
<div class="cell" style="left:261.7px;top:175.7px;width:46.19999999999999px;height:20.95px;line-height:20.95px">0.100000</div>
<div class="cell" style="left:315.9px;top:175.7px;width:46.599999999999966px;height:20.95px;line-height:20.95px">0.005000</div>
<div class="cell" style="left:370.5px;top:175.7px;width:46.10000000000002px;height:20.95px;line-height:20.95px">10.000000</div>
<svg class="abs" style="left:424.4px;top:177.2px" width="27" height="15" viewBox="0 0 27 15"><circle cx="13.45" cy="13.5" r="13.45" fill="#42c0c9"/><path d="M20 6.3 Q18.6 4.8 17 5.6 Q15.6 6.4 15.2 9.5 L13.4 16" fill="none" stroke="#fff" stroke-width="1.3"/><path d="M10.2 12.3 L18.8 13.3" stroke="#fff" stroke-width="1.1"/></svg>
<div class="sw on" style="left:478.6px;top:179.4px"><span class="abs" style="left:4.2px;top:0.2px">启用</span><div class="knob" style="left:19.1px"></div></div>
<div class="sw on" style="left:532.5px;top:179.4px"><span class="abs" style="left:4.2px;top:0.2px">启用</span><div class="knob" style="left:19.1px"></div></div>
<div class="sw on" style="left:586.6px;top:179.4px"><span class="abs" style="left:4.2px;top:0.2px">启用</span><div class="knob" style="left:19.1px"></div></div>
<div class="sw on" style="left:640.9px;top:179.4px"><span class="abs" style="left:4.2px;top:0.2px">启用</span><div class="knob" style="left:19.1px"></div></div>
<div class="sw on" style="left:695.1px;top:179.4px"><span class="abs" style="left:4.2px;top:0.2px">显示</span><div class="knob" style="left:19.1px"></div></div>
<div class="cell" style="left:749.5px;top:175.7px;width:46.0px;height:20.95px;line-height:20.95px">2023-09...</div>
<div class="btn edit" style="left:827.0px;top:180.2px">修改</div>
<div class="btn del" style="left:853.9px;top:179.9px;line-height:11.6px">删除</div>
<div class="abs" style="left:0;top:195.05px;width:872px;height:20.95px;background:#fff"></div>
<div class="hl" style="left:0;top:195.05px;width:872px;height:0.6px"></div>
<div class="abs" style="left:7.4px;top:201.35000000000002px;width:10.4px;height:10px;border:0.6px solid #dcdcdc;border-radius:1px;background:#fff"></div>
<div class="cell" style="left:25.3px;top:196.65px;width:22.100000000000023px;height:20.95px;line-height:20.95px;text-align:center">8</div>
<div class="cell" style="left:55.4px;top:196.65px;width:36.29999999999998px;height:20.95px;line-height:20.95px">1</div>
<div class="cell" style="left:99.7px;top:196.65px;width:45.79999999999998px;height:20.95px;line-height:20.95px">LRC</div>
<div class="cell" style="left:153.5px;top:196.65px;width:46.10000000000002px;height:20.95px;line-height:20.95px">0.179900</div>
<div class="cell" style="left:207.6px;top:196.65px;width:46.10000000000002px;height:20.95px;line-height:20.95px">0.183100</div>
<div class="cell" style="left:261.7px;top:196.65px;width:46.19999999999999px;height:20.95px;line-height:20.95px">0.100000</div>
<div class="cell" style="left:315.9px;top:196.65px;width:46.599999999999966px;height:20.95px;line-height:20.95px">0.005000</div>
<div class="cell" style="left:370.5px;top:196.65px;width:46.10000000000002px;height:20.95px;line-height:20.95px">10.000000</div>
<svg class="abs" style="left:424.4px;top:198.15px" width="27" height="15" viewBox="0 0 27 15"><circle cx="13.45" cy="13.5" r="13.45" fill="#1c60ff"/><circle cx="13.45" cy="13.5" r="11.8" fill="none" stroke="#fff" stroke-width="0.7" opacity="0.85"/><path d="M13.6 5.5 L19 13.7 H8.3 Z" fill="none" stroke="#fff" stroke-width="1.1" stroke-linejoin="round"/><path d="M13.6 6 V16" stroke="#fff" stroke-width="1.1"/></svg>
<div class="sw on" style="left:478.6px;top:200.35000000000002px"><span class="abs" style="left:4.2px;top:0.2px">启用</span><div class="knob" style="left:19.1px"></div></div>
<div class="sw on" style="left:532.5px;top:200.35000000000002px"><span class="abs" style="left:4.2px;top:0.2px">启用</span><div class="knob" style="left:19.1px"></div></div>
<div class="sw on" style="left:586.6px;top:200.35000000000002px"><span class="abs" style="left:4.2px;top:0.2px">启用</span><div class="knob" style="left:19.1px"></div></div>
<div class="sw on" style="left:640.9px;top:200.35000000000002px"><span class="abs" style="left:4.2px;top:0.2px">启用</span><div class="knob" style="left:19.1px"></div></div>
<div class="sw on" style="left:695.1px;top:200.35000000000002px"><span class="abs" style="left:4.2px;top:0.2px">显示</span><div class="knob" style="left:19.1px"></div></div>
<div class="cell" style="left:749.5px;top:196.65px;width:46.0px;height:20.95px;line-height:20.95px">2023-09...</div>
<div class="btn edit" style="left:827.0px;top:201.15px">修改</div>
<div class="btn del" style="left:853.9px;top:200.85000000000002px;line-height:11.6px">删除</div>
<div class="abs" style="left:0;top:216.0px;width:872px;height:20.95px;background:#fff"></div>
<div class="hl" style="left:0;top:216.0px;width:872px;height:0.6px"></div>
<div class="abs" style="left:7.4px;top:222.3px;width:10.4px;height:10px;border:0.6px solid #dcdcdc;border-radius:1px;background:#fff"></div>
<div class="cell" style="left:25.3px;top:217.6px;width:22.100000000000023px;height:20.95px;line-height:20.95px;text-align:center">9</div>
<div class="cell" style="left:55.4px;top:217.6px;width:36.29999999999998px;height:20.95px;line-height:20.95px">1</div>
<div class="cell" style="left:99.7px;top:217.6px;width:45.79999999999998px;height:20.95px;line-height:20.95px">BCH</div>
<div class="cell" style="left:153.5px;top:217.6px;width:46.10000000000002px;height:20.95px;line-height:20.95px">207.730...</div>
<div class="cell" style="left:207.6px;top:217.6px;width:46.10000000000002px;height:20.95px;line-height:20.95px">213.650...</div>
<div class="cell" style="left:261.7px;top:217.6px;width:46.19999999999999px;height:20.95px;line-height:20.95px">0.100000</div>
<div class="cell" style="left:315.9px;top:217.6px;width:46.599999999999966px;height:20.95px;line-height:20.95px">0.005000</div>
<div class="cell" style="left:370.5px;top:217.6px;width:46.10000000000002px;height:20.95px;line-height:20.95px">10.000000</div>
<svg class="abs" style="left:424.4px;top:219.1px" width="27" height="15" viewBox="0 0 27 15"><circle cx="13.45" cy="13.5" r="13.45" fill="#0ac18e"/><path d="M9.5 8.5 H16 Q19.6 8.5 19.6 11.9 Q19.6 13.7 17.9 14.4 Q20.6 15.1 20.6 18.4 Q20.6 22.2 16.5 22.2 H9.5 Z M12.6 10.9 V13.2 H16 Q16.6 13.2 16.6 12 Q16.6 10.9 16 10.9 Z M12.6 16 V19.6 H16.6 Q17.4 19.6 17.4 17.8 Q17.4 16 16.6 16 Z M11.3 5.6 H12.8 V8.6 H11.3 Z M14.3 5.6 H15.8 V8.6 H14.3 Z M11.3 22 H12.8 V24 H11.3 Z M14.3 22 H15.8 V24 H14.3 Z" fill="#fff" fill-rule="evenodd" transform="rotate(-25 15 15) translate(15 15) scale(1.15) translate(-15.5 -14.3)"/></svg>
<div class="sw on" style="left:478.6px;top:221.3px"><span class="abs" style="left:4.2px;top:0.2px">启用</span><div class="knob" style="left:19.1px"></div></div>
<div class="sw on" style="left:532.5px;top:221.3px"><span class="abs" style="left:4.2px;top:0.2px">启用</span><div class="knob" style="left:19.1px"></div></div>
<div class="sw on" style="left:586.6px;top:221.3px"><span class="abs" style="left:4.2px;top:0.2px">启用</span><div class="knob" style="left:19.1px"></div></div>
<div class="sw on" style="left:640.9px;top:221.3px"><span class="abs" style="left:4.2px;top:0.2px">启用</span><div class="knob" style="left:19.1px"></div></div>
<div class="sw on" style="left:695.1px;top:221.3px"><span class="abs" style="left:4.2px;top:0.2px">显示</span><div class="knob" style="left:19.1px"></div></div>
<div class="cell" style="left:749.5px;top:217.6px;width:46.0px;height:20.95px;line-height:20.95px">2023-09...</div>
<div class="btn edit" style="left:827.0px;top:222.1px">修改</div>
<div class="btn del" style="left:853.9px;top:221.8px;line-height:11.6px">删除</div>
<div class="abs" style="left:0;top:236.95px;width:872px;height:20.95px;background:#fff"></div>
<div class="hl" style="left:0;top:236.95px;width:872px;height:0.6px"></div>
<div class="abs" style="left:7.4px;top:243.25px;width:10.4px;height:10px;border:0.6px solid #dcdcdc;border-radius:1px;background:#fff"></div>
<div class="cell" style="left:25.3px;top:238.54999999999998px;width:22.100000000000023px;height:20.95px;line-height:20.95px;text-align:center">10</div>
<div class="cell" style="left:55.4px;top:238.54999999999998px;width:36.29999999999998px;height:20.95px;line-height:20.95px">1</div>
<div class="cell" style="left:99.7px;top:238.54999999999998px;width:45.79999999999998px;height:20.95px;line-height:20.95px">ETC</div>
<div class="cell" style="left:153.5px;top:238.54999999999998px;width:46.10000000000002px;height:20.95px;line-height:20.95px">15.605000</div>
<div class="cell" style="left:207.6px;top:238.54999999999998px;width:46.10000000000002px;height:20.95px;line-height:20.95px">15.741300</div>
<div class="cell" style="left:261.7px;top:238.54999999999998px;width:46.19999999999999px;height:20.95px;line-height:20.95px">0.100000</div>
<div class="cell" style="left:315.9px;top:238.54999999999998px;width:46.599999999999966px;height:20.95px;line-height:20.95px">0.005000</div>
<div class="cell" style="left:370.5px;top:238.54999999999998px;width:46.10000000000002px;height:20.95px;line-height:20.95px">10.000000</div>
<svg class="abs" style="left:424.4px;top:240.04999999999998px" width="27" height="15" viewBox="0 0 27 15"><circle cx="13.45" cy="13.5" r="13.45" fill="#efefef"/><path d="M13.2 4 L18.8 12 L13.2 13.6 L7.6 12 Z" fill="#1fbf3a"/><path d="M7.6 13.2 L13.2 14.9 L18.8 13.2 L18.8 15 H7.6 Z" fill="#13a02c"/></svg>
<div class="sw on" style="left:478.6px;top:242.25px"><span class="abs" style="left:4.2px;top:0.2px">启用</span><div class="knob" style="left:19.1px"></div></div>
<div class="sw on" style="left:532.5px;top:242.25px"><span class="abs" style="left:4.2px;top:0.2px">启用</span><div class="knob" style="left:19.1px"></div></div>
<div class="sw on" style="left:586.6px;top:242.25px"><span class="abs" style="left:4.2px;top:0.2px">启用</span><div class="knob" style="left:19.1px"></div></div>
<div class="sw on" style="left:640.9px;top:242.25px"><span class="abs" style="left:4.2px;top:0.2px">启用</span><div class="knob" style="left:19.1px"></div></div>
<div class="sw on" style="left:695.1px;top:242.25px"><span class="abs" style="left:4.2px;top:0.2px">显示</span><div class="knob" style="left:19.1px"></div></div>
<div class="cell" style="left:749.5px;top:238.54999999999998px;width:46.0px;height:20.95px;line-height:20.95px">2023-09...</div>
<div class="btn edit" style="left:827.0px;top:243.04999999999998px">修改</div>
<div class="btn del" style="left:853.9px;top:242.75px;line-height:11.6px">删除</div>
<div class="hl" style="left:25.3px;top:27.0px;width:0.6px;height:230.9px"></div>
<div class="hl" style="left:47.4px;top:27.0px;width:0.6px;height:230.9px"></div>
<div class="hl" style="left:91.7px;top:27.0px;width:0.6px;height:230.9px"></div>
<div class="hl" style="left:145.5px;top:27.0px;width:0.6px;height:230.9px"></div>
<div class="hl" style="left:199.6px;top:27.0px;width:0.6px;height:230.9px"></div>
<div class="hl" style="left:253.7px;top:27.0px;width:0.6px;height:230.9px"></div>
<div class="hl" style="left:307.9px;top:27.0px;width:0.6px;height:230.9px"></div>
<div class="hl" style="left:362.5px;top:27.0px;width:0.6px;height:230.9px"></div>
<div class="hl" style="left:416.6px;top:27.0px;width:0.6px;height:230.9px"></div>
<div class="hl" style="left:470.6px;top:27.0px;width:0.6px;height:230.9px"></div>
<div class="hl" style="left:524.5px;top:27.0px;width:0.6px;height:230.9px"></div>
<div class="hl" style="left:578.6px;top:27.0px;width:0.6px;height:230.9px"></div>
<div class="hl" style="left:632.9px;top:27.0px;width:0.6px;height:230.9px"></div>
<div class="hl" style="left:687.1px;top:27.0px;width:0.6px;height:230.9px"></div>
<div class="hl" style="left:741.5px;top:27.0px;width:0.6px;height:230.9px"></div>
<div class="hl" style="left:795.5px;top:27.0px;width:0.6px;height:230.9px"></div>
<div class="hl" style="left:903.7px;top:27.0px;width:0.6px;height:230.9px"></div>
<div class="hl" style="left:0;top:48.4px;width:872px;height:0.6px"></div>
<div class="hl" style="left:0;top:257.9px;width:872px;height:0.6px;background:#f0f0f0"></div>
<div class="abs" style="left:0.1px;top:258.0px;width:840px;height:5px;border-radius:2.5px;background:#c1c1c1"></div>
<div class="hl" style="left:0;top:264.3px;width:872px;height:0.6px;background:#f0f0f0"></div>
<svg class="abs" style="left:8.6px;top:270.8px" width="4" height="7" viewBox="0 0 4 7"><path d="M3.5 0.5 L0.7 3.5 L3.5 6.5" fill="none" stroke="#c2c2c2" stroke-width="0.7"/></svg>
<div class="abs" style="left:20.7px;top:267.3px;width:16.5px;height:13.9px;background:#009688;border-radius:1px;color:#fff;font-size:6.4px;line-height:13.9px;text-align:center">1</div>
<div class="abs" style="left:43.1px;top:267.3px;font-size:6.4px;line-height:13.9px;color:#333">2</div>
<div class="abs" style="left:58.6px;top:267.3px;font-size:6.4px;line-height:13.9px;color:#333">3</div>
<div class="abs" style="left:68.6px;top:267.3px;font-size:6.4px;line-height:13.9px;color:#333">…</div>
<div class="abs" style="left:80.9px;top:267.3px;font-size:6.4px;line-height:13.9px;color:#333">5</div>
<svg class="abs" style="left:98.9px;top:270.8px" width="4" height="7" viewBox="0 0 4 7"><path d="M0.5 0.5 L3.3 3.5 L0.5 6.5" fill="none" stroke="#333" stroke-width="0.7"/></svg>
<div class="abs" style="left:111.1px;top:267.3px;font-size:7px;line-height:13.9px;color:#999">到第</div>
<div class="abs" style="left:129.4px;top:267.3px;width:21.5px;height:14.1px;border:0.6px solid #e6e6e6;font-size:6.4px;line-height:13px;text-align:center;color:#333">1</div>
<div class="abs" style="left:156.1px;top:267.3px;font-size:7px;line-height:13.9px;color:#999">页</div>
<div class="abs" style="left:168.3px;top:267.3px;width:24.4px;height:14.1px;border:0.6px solid #e6e6e6;font-size:7px;line-height:13px;text-align:center;color:#333">确定</div>
<div class="abs" style="left:197.8px;top:267.3px;font-size:6.4px;line-height:13.9px;color:#333"><span style="font-size:7px">共</span> 42 <span style="font-size:7px">条</span></div>
<div class="abs" style="left:227.5px;top:267.3px;width:40px;height:14.1px;border:0.6px solid #e6e6e6;font-size:6.4px;line-height:13px;padding-left:3.6px;color:#333">10 <span style="font-size:7px">条</span>/<span style="font-size:7px">页</span><svg class="abs" style="left:32px;top:5px" width="5" height="4" viewBox="0 0 5 4"><path d="M0.6 0.7 L2.5 2.7 L4.4 0.7" fill="none" stroke="#111" stroke-width="1.35"/></svg></div>
</div>
<div class="abs" style="left:488px;top:237px;font-size:11.8px;line-height:13px;font-weight:900;color:#1010f0;letter-spacing:-0.3px;-webkit-text-stroke:0.35px #1010f0;transform:scaleY(0.86);transform-origin:0 0">汉城源码</div>
<div class="abs" style="left:126px;top:476.6px;width:898px;height:19.4px;background:#fff"></div>
<div class="abs" style="left:134.2px;top:483.9px;font-size:7.5px;line-height:10px;color:#666">copyright © 2020 <span style="color:#3d8af7">easyweb.vip</span> all rights reserved.</div>
<div class="abs" style="left:978.3px;top:483.9px;font-size:7.47px;line-height:10px;color:#666">Version 3.1.8</div>
<div class="abs" style="left:126px;top:476.6px;width:1.3px;height:20px;background:#dcdde0"></div></body></html>
